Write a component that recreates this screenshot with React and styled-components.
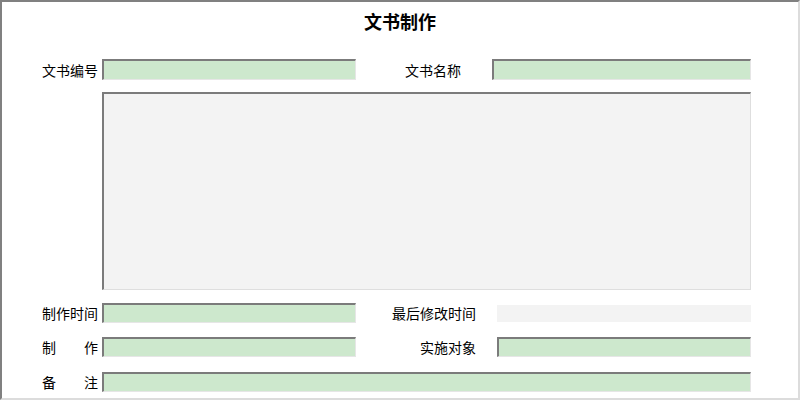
import React from 'react';
import styled, { createGlobalStyle } from 'styled-components';

const GlobalStyle = createGlobalStyle`
    html, body {
        margin: 0;
        padding: 0;
        background: #ffffff;
    }
    body {
        font-family: "Noto Sans CJK SC", "Liberation Sans", sans-serif;
        color: #000;
    }
`

const Frame = styled.div`
    box-sizing: border-box;
    width: 800px;
    height: 400px;
    border-top: 2px solid #808080;
    border-left: 2px solid #808080;
    border-right: 2px solid #dcdcdc;
    border-bottom: 2px solid #dcdcdc;
    display: flex;
    flex-direction: column;
`

const Title = styled.h1`
    margin: 0;
    padding-top: 6px;
    height: 51px;
    line-height: 26px;
    font-size: 18px;
    font-weight: bold;
    text-align: center;
    box-sizing: border-box;
`

const Row = styled.div`
    display: flex;
    align-items: center;
    height: ${p => p.$h || 20}px;
    margin-top: ${p => p.$top || 0}px;
`

const Label = styled.div`
    box-sizing: border-box;
    width: ${p => p.$w}px;
    padding-left: ${p => p.$pl || 0}px;
    padding-right: ${p => p.$pr || 0}px;
    text-align: ${p => p.$align || 'right'};
    font-size: 14px;
    line-height: 20px;
    white-space: nowrap;
`

const Spread = styled.span`
    display: inline-block;
    width: 56px;
    text-align: justify;
    text-align-last: justify;
`

const Field = styled.div`
    box-sizing: border-box;
    width: ${p => p.$w}px;
    height: ${p => (p.$flat ? '17px' : '100%')};
    background: ${p => (p.$flat ? '#f3f3f3' : '#cde8cd')};
    border-top: ${p => (p.$flat ? 'none' : '2px solid #7b7b7b')};
    border-left: ${p => (p.$flat ? 'none' : '2px solid #7b7b7b')};
    border-right: ${p => (p.$flat ? 'none' : '1px solid #e6e6e6')};
    border-bottom: ${p => (p.$flat ? 'none' : '1px solid #e6e6e6')};
    margin-left: ${p => p.$ml || 0}px;
`

const TextArea = styled.div`
    box-sizing: border-box;
    width: 649px;
    height: 198px;
    margin-left: 100px;
    margin-top: 12px;
    background: #f3f3f3;
    border-top: 2px solid #7b7b7b;
    border-left: 2px solid #7b7b7b;
    border-right: 1px solid #dedede;
    border-bottom: 1px solid #dedede;
`

export default function App() {
    return (
        <>
            <GlobalStyle />
            <Frame>
                <Title>文书制作</Title>
                <Row $h={21} $top={6}>
                    <Label $w={96}>文书编号</Label>
                    <Field $w={254} $ml={4} />
                    <Label $w={136} $pl={49} $align="left">文书名称</Label>
                    <Field $w={259} />
                </Row>
                <TextArea />
                <Row $top={13}>
                    <Label $w={96}>制作时间</Label>
                    <Field $w={254} $ml={4} />
                    <Label $w={141} $pr={21}>最后修改时间</Label>
                    <Field $w={254} $flat />
                </Row>
                <Row $top={14}>
                    <Label $w={96}><Spread>制作</Spread></Label>
                    <Field $w={254} $ml={4} />
                    <Label $w={141} $pr={21}>实施对象</Label>
                    <Field $w={254} />
                </Row>
                <Row $top={15}>
                    <Label $w={96}><Spread>备注</Spread></Label>
                    <Field $w={649} $ml={4} />
                </Row>
            </Frame>
        </>
    );
}
